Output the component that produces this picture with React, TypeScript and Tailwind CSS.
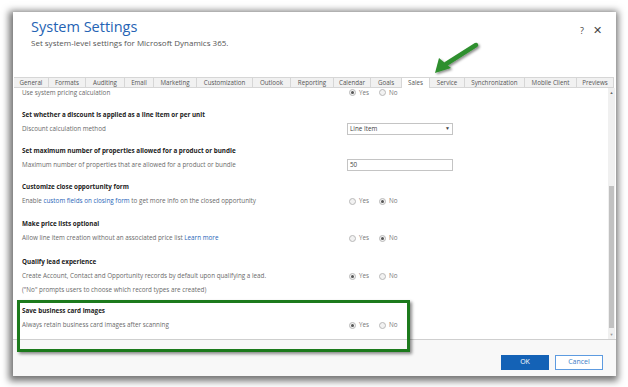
import React from "react";

const tabs: { label: string; cls: string; active?: boolean }[] = [
  { label: "General", cls: "w-[35px]" },
  { label: "Formats", cls: "w-[37px]" },
  { label: "Auditing", cls: "w-[39px]" },
  { label: "Email", cls: "w-[29px]" },
  { label: "Marketing", cls: "w-[43px]" },
  { label: "Customization", cls: "w-[56px]" },
  { label: "Outlook", cls: "w-[38px]" },
  { label: "Reporting", cls: "w-[43px]" },
  { label: "Calendar", cls: "w-[37px]" },
  { label: "Goals", cls: "w-[31px]" },
  { label: "Sales", cls: "w-[28px]", active: true },
  { label: "Service", cls: "w-[35px]" },
  { label: "Synchronization", cls: "w-[60px]" },
  { label: "Mobile Client", cls: "w-[52px]" },
  { label: "Previews", cls: "w-[37px]" },
];

function Radio({ checked, label }: { checked?: boolean; label: string }) {
  return (
    <span className="flex items-center gap-[3px]">
      <span className="w-[7px] h-[7px] rounded-full border border-[#b8b8b8] bg-[#f2f2f2] flex items-center justify-center">
        {checked && <span className="w-[3px] h-[3px] rounded-full bg-[#555]" />}
      </span>
      <span className="text-[#777]">{label}</span>
    </span>
  );
}

function YesNo({ yes }: { yes: boolean }) {
  return (
    <div className="flex items-center gap-[10px] pl-[2px]">
      <Radio checked={yes} label="Yes" />
      <Radio checked={!yes} label="No" />
    </div>
  );
}

function Row({
  children,
  control,
  cls = "h-[14px]",
}: {
  children: React.ReactNode;
  control?: React.ReactNode;
  cls?: string;
}) {
  return (
    <div className={`flex items-center ${cls}`}>
      <div className="w-[325px] text-[#6a6a6a] whitespace-nowrap">{children}</div>
      <div className="flex items-center">{control}</div>
    </div>
  );
}

function Heading({ children, cls }: { children: React.ReactNode; cls: string }) {
  return (
    <div className={`h-[14px] flex items-center font-bold text-[#222] whitespace-nowrap ${cls}`}>
      {children}
    </div>
  );
}

export default function App() {
  return (
    <div
      className="relative w-[628px] h-[387px] bg-white overflow-hidden pt-[12px] pl-[13px]"
      style={{ fontFamily: '"Open Sans", "Noto Sans", sans-serif' }}
    >
      <div className="w-[603px] h-[364px] bg-white flex flex-col shadow-[-1px_2px_7px_3px_rgba(0,0,0,0.55)]">
        {/* Header */}
        <div className="h-[65px] relative pl-[18px] pt-[5px]">
          <div className="text-[14.5px] leading-[20px] text-[#2563b4]">System Settings</div>
          <div className="text-[8px] leading-[11px] text-[#555]">
            Set system-level settings for Microsoft Dynamics 365.
          </div>
          <div className="absolute right-[14px] top-[10px] flex items-center gap-[9px] text-[#444] text-[9px]">
            <span>?</span>
            <span className="text-[11px]">✕</span>
          </div>
        </div>

        {/* Tabs */}
        <div className="flex pl-[1px] h-[11px]">
          {tabs.map((t) => (
            <div
              key={t.label}
              className={`${t.cls} h-[11px] flex items-center justify-center text-[6.2px] text-[#555] border-t border-r border-[#d6d6d6] ${
                t.active ? "bg-white" : "bg-[#f1f1f1] border-b"
              }`}
            >
              {t.label}
            </div>
          ))}
        </div>

        {/* Content + scrollbar */}
        <div className="flex h-[252px] border-b border-[#cfcfcf] text-[6.3px]">
          <div className="flex-1 pl-[9px] overflow-hidden">
            <Row cls="h-[9px]" control={<YesNo yes={true} />}>
              Use system pricing calculation
            </Row>

            <Heading cls="mt-[11px]">Set whether a discount is applied as a line item or per unit</Heading>
            <Row
              control={
                <div className="w-[106px] h-[12px] border border-[#c4c4c4] flex items-center justify-between px-[2px] text-[#444] bg-white">
                  <span>Line Item</span>
                  <span className="text-[5px]">▼</span>
                </div>
              }
            >
              Discount calculation method
            </Row>

            <Heading cls="mt-[8px]">Set maximum number of properties allowed for a product or bundle</Heading>
            <Row
              control={
                <div className="w-[106px] h-[12px] border border-[#c4c4c4] flex items-center px-[2px] text-[#444] bg-white">
                  50
                </div>
              }
            >
              Maximum number of properties that are allowed for a product or bundle
            </Row>

            <Heading cls="mt-[8px]">Customize close opportunity form</Heading>
            <Row control={<YesNo yes={false} />}>
              Enable <span className="text-[#2a66b8]">custom fields on closing form</span> to get more info on the closed opportunity
            </Row>

            <Heading cls="mt-[9px]">Make price lists optional</Heading>
            <Row control={<YesNo yes={false} />}>
              Allow line item creation without an associated price list <span className="text-[#2a66b8]">Learn more</span>
            </Row>

            <Heading cls="mt-[10px]">Qualify lead experience</Heading>
            <Row control={<YesNo yes={true} />}>
              Create Account, Contact and Opportunity records by default upon qualifying a lead.
            </Row>
            <Row>("No" prompts users to choose which record types are created)</Row>

            <Heading cls="mt-[7px]">Save business card images</Heading>
            <Row control={<YesNo yes={true} />}>Always retain business card images after scanning</Row>
          </div>

          {/* Scrollbar */}
          <div className="w-[7px] mr-[1px] bg-[#f0f0f0] flex flex-col items-center">
            <div className="h-[9px] flex items-center justify-center text-[4px] text-[#666]">▲</div>
            <div className="h-[89px]" />
            <div className="w-[5px] h-[142px] bg-[#c1c1c1]" />
            <div className="flex-1" />
            <div className="h-[9px] flex items-center justify-center text-[4px] text-[#999]">▼</div>
          </div>
        </div>

        {/* Footer */}
        <div className="flex-1 bg-[#f8f8f8] flex justify-end items-start pt-[15px] pr-[13px] gap-[6px]">
          <div className="w-[48px] h-[15px] bg-[#1462b6] text-white text-[7px] flex items-center justify-center">
            OK
          </div>
          <div className="w-[48px] h-[15px] bg-white border border-[#5d9be0] text-[#3b7cc6] text-[7px] flex items-center justify-center">
            Cancel
          </div>
        </div>
      </div>

      {/* Green highlight box */}
      <div className="absolute left-[17px] top-[300px] w-[393px] h-[52px] border-[3px] border-[#1c7a1c] shadow-[2px_2px_3px_rgba(0,0,0,0.45)]" />

      {/* Green arrow */}
      <svg className="absolute left-[428px] top-[38px]" width="56" height="40" viewBox="0 0 56 40">
        <defs>
          <filter id="sh" x="-20%" y="-20%" width="160%" height="160%">
            <feDropShadow dx="1.5" dy="1.5" stdDeviation="1" floodColor="#000" floodOpacity="0.45" />
          </filter>
        </defs>
        <g filter="url(#sh)">
          <line x1="48" y1="7" x2="18" y2="26" stroke="#2f8f2f" strokeWidth="4.5" strokeLinecap="round" />
          <polygon points="7,35 11,20 23,30" fill="#2f8f2f" />
        </g>
      </svg>
    </div>
  );
}
